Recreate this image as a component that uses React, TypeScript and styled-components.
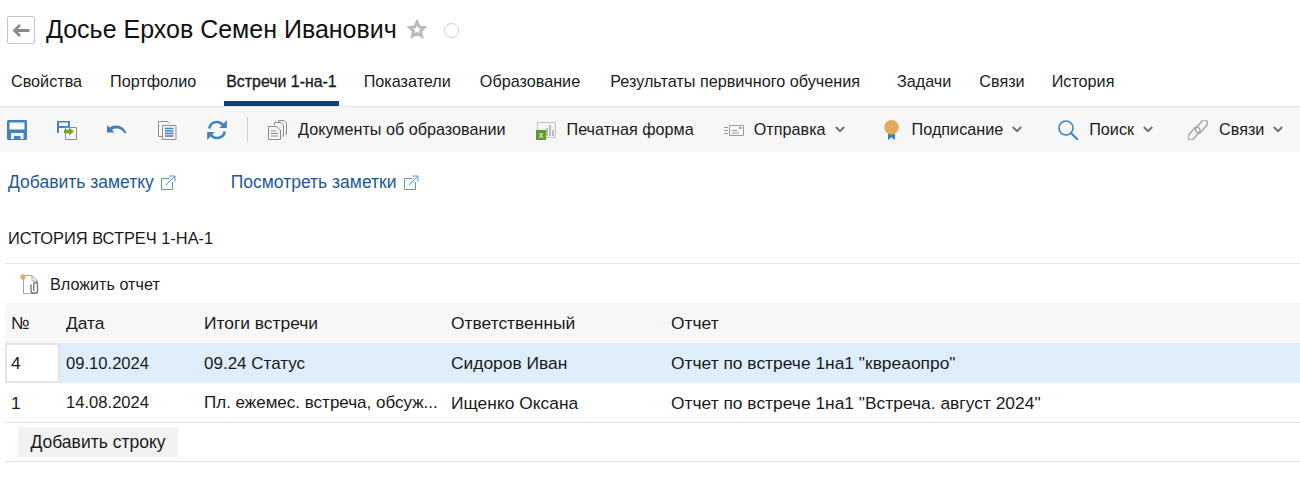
import React from "react";
import styled, { createGlobalStyle } from "styled-components";

const Global = createGlobalStyle`
  html, body { margin: 0; padding: 0; background: #fff; }
  body { font-family: "Liberation Sans", Arial, sans-serif; font-size: 16px; color: #1a1a1a; width: 1300px; height: 497px; overflow: hidden; }
  * { box-sizing: border-box; }
`;

const Page = styled.div`display: flex; flex-direction: column; width: 1300px;`;
const Header = styled.header`display: flex; align-items: center; height: 60px; padding-left: 7px;`;
const BackButton = styled.button`
  width: 28px; height: 28px; padding: 0; background: #fff; border: 1px solid #c4c4c4; border-radius: 2px;
  display: flex; align-items: center; justify-content: center;
`;
const Title = styled.h1`margin: 0 0 2px 11px; font-size: 25px; font-weight: 400; color: #111; line-height: 28px;`;
const StarWrap = styled.span`display: flex; margin-left: 10px; margin-bottom: 2px;`;
const Status = styled.span`width: 15px; height: 15px; border-radius: 50%; border: 1px solid #c9d0d8; margin-left: 17px; background: #fff;`;

const Tabs = styled.nav`display: flex; height: 46px; padding-left: 9px;`;
const Tab = styled.a<{ $active?: boolean; $gap: number }>`
  display: flex; align-items: center; height: 46px; padding: 2px 2px 0; margin-right: ${p => p.$gap}px;
  font-size: ${p => (p.$active ? 15.9 : 16.2)}px; color: #1a1a1a; white-space: nowrap;
  ${p => (p.$active ? "-webkit-text-stroke: 0.3px #1a1a1a;" : "")}
  border-bottom: 5px solid ${p => (p.$active ? "#15416f" : "transparent")};
`;

const Toolbar = styled.div`
  display: flex; align-items: center; height: 46px; background: #f7f7f7; border-top: 1px solid #e3e3e3; padding-left: 7px;
`;
const IconButton = styled.span<{ $gap?: number }>`
  display: flex; width: 20px; height: 20px; margin-right: ${p => p.$gap ?? 30}px;
`;
const Separator = styled.span`width: 1px; height: 25px; background: #d2d2d2; margin-right: 20px;`;
const ToolItem = styled.span<{ $gap: number }>`
  display: flex; align-items: center; margin-right: ${p => p.$gap}px; font-size: 16.2px; white-space: nowrap; color: #1a1a1a;
`;
const ToolIcon = styled.span<{ $gap: number }>`display: flex; width: 20px; height: 20px; margin-right: ${p => p.$gap}px;`;
const Chevron = styled.span`display: flex; margin-left: 9px;`;

const Links = styled.div`display: flex; height: 60px; padding: 1px 0 0 8px; align-items: center;`;
const LinkItem = styled.a<{ $gap: number }>`
  display: flex; align-items: center; gap: 6px; color: #1c5a96; font-size: 17.5px; margin-right: ${p => p.$gap}px;
`;

const Section = styled.div`
  margin: 16px 0 0 0; padding-left: 8px; font-size: 16.4px; height: 35px; line-height: 20px; color: #1a1a1a;
`;
const Line = styled.div`height: 1px; background: #e3e3e3; margin-left: 5px;`;
const Attach = styled.div`display: flex; align-items: center; height: 39px; padding: 1px 0 0 20px; font-size: 16.2px;`;
const AttachIcon = styled.span`display: flex; width: 20px; height: 20px; margin-right: 10px;`;

const Row = styled.div<{ $bg?: string; $border?: boolean }>`
  display: grid; grid-template-columns: 55px 138px 247px 220px 1fr; align-items: center;
  margin-left: 5px; height: 40px; background: ${p => p.$bg ?? "transparent"};
  ${p => (p.$border ? "border-bottom: 1px solid #e3e3e3;" : "")}
`;
const Cell = styled.div<{ $active?: boolean; $size?: number }>`
  padding: 1px 0 0 6px; font-size: ${p => p.$size ?? 17.4}px; white-space: nowrap; overflow: hidden; color: #1a1a1a;
  ${p => p.$active ? `
    height: 40px; background: #fff; border: 2px solid #e2e2ea; padding: 0 0 0 4px; display: flex; align-items: center;
  ` : ""}
`;
const AddRow = styled.div`display: flex; align-items: center; height: 39px; margin-left: 5px; border-bottom: 1px solid #e3e3e3; padding-left: 13px;`;
const AddButton = styled.button`
  width: 160px; height: 30px; padding: 0; border: 0; background: #f2f2f2; font: inherit; color: #1a1a1a; font-size: 17.5px;
`;

const blue = "#4181bd";

const Save = () => (
  <svg width="20" height="20" viewBox="0 0 20 20">
    <path fill={blue} d="M0 1.500C0 .7.7 0 1.500 0h17c.8 0 1.500.7 1.500 1.500v17c0 .8-.7 1.500-1.500 1.500h-17C.7 20 0 19.300 0 18.500z" />
    <rect x="2.500" y="2.500" width="15" height="7" fill="#f7f7f7" />
    <path fill="#f7f7f7" d="M4 13h12.500v6h-3v-3H7v3H4z" />
  </svg>
);
const SaveAs = () => (
  <svg width="20" height="20" viewBox="0 0 20 20">
    <path fill={blue} d="M0 1h13v12H0z" />
    <rect x="2" y="2.500" width="9" height="3.500" fill="#f7f7f7" />
    <rect x="2" y="8" width="9" height="5" fill="#f7f7f7" />
    <path fill="#f7f7f7" stroke="#8c8c8c" d="M8.500 7.500h11v12h-11z" />
    <path fill="#6fa81e" d="M7 9.800h5V7.500l5 4-5 4v-2.300H7z" />
  </svg>
);
const Undo = () => (
  <svg width="20" height="20" viewBox="0 0 20 20" fill="none">
    <path fill={blue} d="M0 12.500V5l2.600 2.400C4.500 6.200 6.500 5.500 9 5.500c4.500 0 8.500 2.600 10.500 7.500l-1.800.5C15.800 10.300 12.800 8.500 9.500 8.500c-1.800 0-3.300.5-4.500 1.200l2.500 2.800z" />
  </svg>
);
const Copy = () => (
  <svg width="20" height="20" viewBox="0 0 20 20" fill="none">
    <path stroke="#8f8f8f" d="M5 16.500H1.500V1.500h9.500l2 2" />
    <path stroke="#8f8f8f" d="M5.500 5.500h13.500v14H5.500z" fill="#f7f7f7" />
    <path stroke={blue} strokeWidth="1.300" d="M8 8.500h8.500M8 11h8.500M8 13.500h8.500M8 16h8.500" />
  </svg>
);
const Refresh = () => (
  <svg width="20" height="20" viewBox="0 0 20 20" fill="none">
    <path stroke={blue} strokeWidth="2.600" d="M2.200 8.500C3 4.600 6 2 10 2c2.800 0 4.600 1.200 6 3M17.800 11.500C17 15.400 14 18 10 18c-2.800 0-4.600-1.200-6-3" />
    <path fill={blue} d="M19.800 0v8h-7.500zM.2 20v-8h7.500z" />
  </svg>
);
const Docs = () => (
  <svg width="20" height="20" viewBox="0 0 20 20" fill="none" stroke="#8c8c8c">
    <path d="M10.500 3V.5h5.500l2.500 2.500v11h-1.500" />
    <path d="M6.500 5V2.500h6.500l2.500 2.500v11H14" fill="#f7f7f7" />
    <path d="M.5 6.500h8l4 3.500v9.500H.5z" fill="#f7f7f7" />
    <path d="M3 11h5M3 13.500h7M3 16h7" />
  </svg>
);
const Excel = () => (
  <svg width="20" height="20" viewBox="0 0 20 20">
    <path fill="#f4f4f4" stroke="#c4c4c4" d="M1.500 2.500h18v15h-18z" />
    <path fill="#bdbdbd" d="M10 8h2v8h-2zM13 5h2v11h-2zM16 10h2v6h-2z" />
    <rect x="0" y="10" width="10" height="10" fill="#5f9a2a" />
    <text x="5" y="18" fontSize="9" fontFamily="Liberation Sans" fill="#fff" textAnchor="middle">x</text>
  </svg>
);
const Send = () => (
  <svg width="20" height="20" viewBox="0 0 20 20" fill="none">
    <path stroke="#9a9a9a" d="M5.500 5.500h14v10h-14z" />
    <path stroke="#9a9a9a" d="M0 7.500h4M0 10.500h4M0 13.500h4M8 10.500h5M8 13h7" />
    <rect x="15" y="7" width="2.500" height="2" fill="#9a9a9a" />
  </svg>
);
const Medal = () => (
  <svg width="20" height="20" viewBox="0 0 20 20">
    <path fill="#4181bd" d="M6 12h7v8l-3.500-2.600L6 20z" />
    <circle cx="9.500" cy="7.300" r="7.300" fill="#e2ab5b" />
  </svg>
);
const Search = () => (
  <svg width="20" height="20" viewBox="0 0 20 20" fill="none" stroke={blue}>
    <circle cx="8" cy="8" r="7" strokeWidth="1.600" />
    <path strokeWidth="2" d="M13 13l7 7" />
  </svg>
);
const Chain = () => (
  <svg width="20" height="20" viewBox="0 0 20 20" fill="none" stroke="#a6a6a6" strokeWidth="1.500">
    <rect x="-3.200" y="-7.500" width="6.400" height="15" rx="3.200" transform="translate(6 13.500) rotate(40)" />
    <rect x="-3.200" y="-7.500" width="6.400" height="15" rx="3.200" transform="translate(13.500 6.500) rotate(40)" />
  </svg>
);
const Down = () => (
  <svg width="10" height="7" viewBox="0 0 10 7" fill="none">
    <path stroke="#68737d" strokeWidth="2" d="M.8 1l4.200 4.200L9.200 1" />
  </svg>
);
const External = () => (
  <svg width="16" height="16" viewBox="0 0 16 16" fill="none" stroke="#5b93c7">
    <path d="M9.500 3.500H1.500v11h11V7" />
    <path d="M6 10L14.500 1.500M9.500 1h5.500v5.500" />
  </svg>
);
const Clip = () => (
  <svg width="20" height="20" viewBox="0 0 20 20" fill="none">
    <path stroke="#a5a5a5" fill="#fff" d="M3.500 1.500h8.500l5.500 5.500v12.500h-14z" />
    <path stroke="#a5a5a5" d="M12 1.500V7h5.500" />
    <path stroke="#e2ab5b" strokeWidth="1.200" d="M3 0v6M0 3h6M1 1l4 4M5 1L1 5" />
    <circle cx="3" cy="3" r="1.800" fill="#e2ab5b" />
    <path stroke="#6f7a85" strokeWidth="1.400" d="M11 10.500v6.500c0 2.800 6.500 2.800 6.500 0V10c0-2-3.800-2-3.800 0v7" />
  </svg>
);
const Star = () => (
  <svg width="20" height="20" viewBox="0 0 24 24">
    <path fill="none" stroke="#b9b9b9" strokeWidth="3.400" strokeLinejoin="miter" d="M12 3.500l2.600 5.900 6.400.6-4.800 4.300 1.400 6.300L12 17.300l-5.600 3.300 1.400-6.300L3 10l6.400-.6z" />
  </svg>
);
const Back = () => (
  <svg width="18" height="13" viewBox="0 0 18 13" fill="none" stroke="#8a8a8a" strokeWidth="2.800">
    <path d="M17.500 6.500H3M8 1 2.500 6.500 8 12" />
  </svg>
);

const tabs: [string, number, boolean?][] = [
  ["Свойства", 24], ["Портфолио", 26], ["Встречи 1-на-1", 23, true], ["Показатели", 25], ["Образование", 26],
  ["Результаты первичного обучения", 33], ["Задачи", 24], ["Связи", 23], ["История", 0],
];

const rows = [
  { n: "4", date: "09.10.2024", res: "09.24 Статус", who: "Сидоров Иван", rep: "Отчет по встрече 1на1 \"квреаопро\"", active: true },
  { n: "1", date: "14.08.2024", res: "Пл. ежемес. встреча, обсуж...", who: "Ищенко Оксана", rep: "Отчет по встрече 1на1 \"Встреча. август 2024\"" },
];

export default function App() {
  return (
    <Page>
      <Global />
      <Header>
        <BackButton><Back /></BackButton>
        <Title>Досье Ерхов Семен Иванович</Title>
        <StarWrap><Star /></StarWrap>
        <Status />
      </Header>
      <Tabs>
        {tabs.map(([t, g, a]) => <Tab key={t} $gap={g} $active={a}>{t}</Tab>)}
      </Tabs>
      <Toolbar>
        <IconButton><Save /></IconButton>
        <IconButton><SaveAs /></IconButton>
        <IconButton><Undo /></IconButton>
        <IconButton><Copy /></IconButton>
        <IconButton $gap={20}><Refresh /></IconButton>
        <Separator />
        <ToolItem $gap={30}><ToolIcon $gap={10}><Docs /></ToolIcon>Документы об образовании</ToolItem>
        <ToolItem $gap={30}><ToolIcon $gap={11}><Excel /></ToolIcon>Печатная форма</ToolItem>
        <ToolItem $gap={37}><ToolIcon $gap={10}><Send /></ToolIcon>Отправка<Chevron><Down /></Chevron></ToolItem>
        <ToolItem $gap={36}><ToolIcon $gap={10}><Medal /></ToolIcon>Подписание<Chevron><Down /></Chevron></ToolItem>
        <ToolItem $gap={35}><ToolIcon $gap={11}><Search /></ToolIcon>Поиск<Chevron><Down /></Chevron></ToolItem>
        <ToolItem $gap={0}><ToolIcon $gap={11}><Chain /></ToolIcon>Связи<Chevron><Down /></Chevron></ToolItem>
      </Toolbar>
      <Links>
        <LinkItem $gap={55}>Добавить заметку<External /></LinkItem>
        <LinkItem $gap={0}>Посмотреть заметки<External /></LinkItem>
      </Links>
      <Section>ИСТОРИЯ ВСТРЕЧ 1-НА-1</Section>
      <Line />
      <Attach><AttachIcon><Clip /></AttachIcon>Вложить отчет</Attach>
      <Row $bg="#f7f7f7">
        <Cell>№</Cell><Cell>Дата</Cell><Cell>Итоги встречи</Cell><Cell>Ответственный</Cell><Cell>Отчет</Cell>
      </Row>
      {rows.map((r, i) => (
        <Row key={r.n} $bg={r.active ? "#deeefb" : undefined} $border={i === 1}>
          <Cell $active={r.active}>{r.n}</Cell>
          <Cell $size={16.6}>{r.date}</Cell>
          <Cell $size={17}>{r.res}</Cell>
          <Cell>{r.who}</Cell>
          <Cell>{r.rep}</Cell>
        </Row>
      ))}
      <AddRow><AddButton>Добавить строку</AddButton></AddRow>
    </Page>
  );
}
